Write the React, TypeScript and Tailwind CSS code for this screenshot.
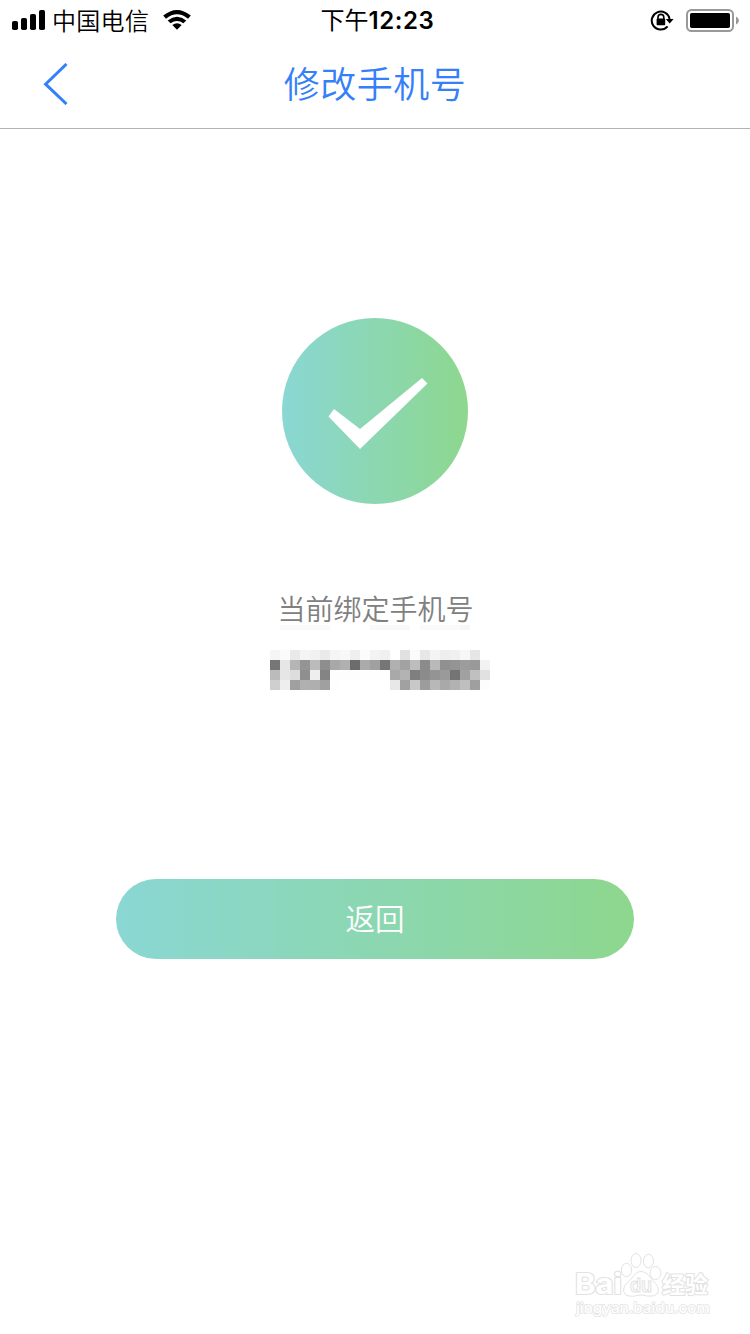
import React from 'react';

{/* Pantalla de confirmación del cambio de número de teléfono. */}

// Tonos de gris del número censurado, un valor por celda de 10px
const mosaicRows = [
  ['f5', 'fb', 'e9', 'f4', 'f1', 'ea', 'f5', 'f8', 'ef', 'fc', 'f3', 'f0', 'ff', 'e1', 'fb', 'e7', 'f4', 'ee', 'f0', 'f7', 'e6', 'ff'],
  ['76', 'e6', 'b5', '94', 'bb', '8e', 'a8', 'b0', '6c', 'ab', 'a0', '76', 'b0', 'a2', 'bd', '8b', 'b9', '90', '94', '9c', '99', 'f2'],
  ['bb', 'e6', 'dd', '8f', 'ee', '84', 'fd', 'fd', 'fd', 'fe', 'fe', 'fe', 'a9', 'b3', '7f', '8b', '94', '9a', '74', 'a1', 'c0', 'e1'],
  ['cf', 'ee', 'a0', 'b0', 'af', 'a0', 'fe', 'ff', 'ff', 'ff', 'ff', 'ff', 'e8', 'a1', 'c8', '9c', 'b8', 'a9', 'b2', 'bf', '9f', 'fd'],
];

const StatusBar: React.FC = () => (
  <div className="grid h-10 grid-cols-3 items-center text-2xl leading-10 text-black">
    <div className="flex h-10 items-center pl-3">
      {/* Señal */}
      <svg className="h-10 w-[33px]" viewBox="0 0 33 40">
        <rect x="0" y="21" width="6" height="9" rx="1.8" />
        <rect x="9" y="18" width="6" height="12" rx="1.8" />
        <rect x="18" y="14" width="6" height="16" rx="1.8" />
        <rect x="27" y="10" width="6" height="20" rx="1.8" />
      </svg>
      <span className="ml-[7px] font-[350] tracking-[0.3px]">中国电信</span>
      {/* Wifi */}
      <svg className="ml-3.5 h-10 w-7" viewBox="0 0 28 40">
        <path d="M0.2 15.6 Q14 4.2 27.8 15.6 L25 18.7 Q14 9.8 3 18.7 Z" />
        <path d="M4.7 20.4 Q14 13.2 23.3 20.4 L20.4 23.3 Q14 18.6 7.6 23.3 Z" />
        <path d="M9.3 25 Q14 21.6 18.7 25 L14 29.8 Z" />
      </svg>
    </div>
    <div className="h-10 pt-px pl-[5px] text-center font-['Inter','Noto_Sans_CJK_SC',sans-serif] font-semibold tracking-[0.6px]">
      <span className="font-normal tracking-normal">下午</span>12:23
    </div>
    <div className="flex h-10 items-center justify-end pr-[11px]">
      {/* Bloqueo de rotación */}
      <svg className="h-10 w-6" viewBox="0 0 24 40" fill="none">
        <path d="M17.6 26.4 A9 9 0 1 1 19.6 19" stroke="#000" strokeWidth="2" />
        <path d="M15.8 18.9 H23.6 L19.7 23.4 Z" fill="#000" />
        <path d="M8 19 V17.3 A2.9 2.9 0 0 1 13.8 17.3 V19" stroke="#000" strokeWidth="1.6" />
        <rect x="6.6" y="18.6" width="8.6" height="6.6" rx="0.8" fill="#000" />
      </svg>
      {/* Batería */}
      <svg className="ml-3 h-10 w-[53px]" viewBox="0 0 53 40">
        <rect x="1" y="10" width="46" height="21" rx="4.5" fill="none" stroke="#999" strokeWidth="2" />
        <rect x="4" y="13" width="40" height="15" rx="1.8" />
        <path d="M50 16.5 Q53 18 53 20.5 Q53 23 50 24.5 Z" fill="#999" />
      </svg>
    </div>
  </div>
);

const Header: React.FC = () => (
  <header className="grid h-[89px] grid-cols-[1fr_auto_1fr] items-center border-b border-[#b2b2b2] text-[#3580f8]">
    <button className="pl-[43px]" aria-label="返回">
      <svg className="h-[42px] w-[25px]" viewBox="0 0 25 42" fill="none" stroke="currentColor" strokeWidth="3">
        <path d="M23.5 1 L2.6 21.2 L23.5 41" />
      </svg>
    </button>
    <h1 className="pb-1 text-4xl font-[350] tracking-[0.5px]">修改手机号</h1>
  </header>
);

const Watermark: React.FC = () => (
  <svg className="ml-auto mr-8 h-[80px] w-[150px]" viewBox="0 0 150 80" fill="#fff" stroke="#e2e2e2">
    <g style={{ paintOrder: 'stroke' }} strokeWidth="2" strokeLinejoin="round">
      <text x="7" y="48.5" fontSize="28" fontWeight="700" fontFamily="Inter, sans-serif" textLength="47" lengthAdjust="spacingAndGlyphs">Bai</text>
      <text x="94" y="48" fontSize="23" fontWeight="700" fontFamily="'Noto Sans CJK SC', sans-serif" textLength="46">经验</text>
      <text x="8" y="68" fontSize="14.5" fontWeight="500" strokeWidth="1.4" fontFamily="Inter, sans-serif" textLength="134" lengthAdjust="spacingAndGlyphs">jingyan.baidu.com</text>
    </g>
    <ellipse cx="58.5" cy="25" rx="5.2" ry="6.6" />
    <ellipse cx="68" cy="15.5" rx="5" ry="7" />
    <ellipse cx="80.5" cy="16" rx="5" ry="6.7" />
    <ellipse cx="87.5" cy="28" rx="5.4" ry="6.5" />
    <path d="M73 26.5 C80 26.5 82 33 86 37 C93 43 91 51 83 51 C78 51.5 76 50 73 50 C69 50 66 52 61 51 C54 50 54 42 60 37 C65 33 67 26.5 73 26.5 Z" />
    <text x="62" y="47" fontSize="19" fontWeight="600" fontFamily="Inter, sans-serif" textLength="22" lengthAdjust="spacingAndGlyphs">du</text>
  </svg>
);

const App: React.FC = () => {
  return (
    <div className="flex h-[1334px] w-[750px] flex-col overflow-hidden bg-white font-['Noto_Sans_CJK_SC',sans-serif]">
      <StatusBar />
      <Header />

      {/* Contenido Principal */}
      <main className="flex flex-1 flex-col items-center">
        <div className="mt-[189px] h-[186px] w-[186px] rounded-full bg-linear-to-r/srgb from-[#8ad7d4] to-[#8dd78e]">
          <svg className="h-full w-full" viewBox="0 0 186 186" fill="#fff">
            <path d="M52 91 L78 111 L140 60 L145.5 65.5 L78 131 L46.5 98.5 Z" />
          </svg>
        </div>

        <p className="mt-[83px] pb-px pl-px text-[28px] leading-[42px] font-[350] text-[#808080]">当前绑定手机号</p>

        {/* Restos del censurado debajo del texto */}
        <div className="-mt-[5px] flex h-[5px] w-[190px]">
          <div className="w-[50px] bg-[#fafafa]" />
          <div className="ml-10 w-10 bg-[#f9f9f9]" />
          <div className="ml-2.5 w-10 bg-[#fafafa]" />
          <div className="w-2.5 bg-[#f6f6f6]" />
        </div>

        {/* Número censurado */}
        <div className="mt-5 ml-2.5">
          {mosaicRows.map((row, y) => (
            <div key={y} className="flex">
              {row.map((tone, x) => (
                <div key={x} className="h-2.5 w-2.5" style={{ backgroundColor: `#${tone}${tone}${tone}` }} />
              ))}
            </div>
          ))}
        </div>

        <button className="mt-[189px] h-20 w-[518px] rounded-full bg-linear-to-r/srgb from-[#8ad7d4] to-[#8dd78e] pb-1 text-[29.5px] font-[350] text-white">
          返回
        </button>
      </main>

      <Watermark />
      <div className="h-[9px]" />
    </div>
  );
};

export default App;
